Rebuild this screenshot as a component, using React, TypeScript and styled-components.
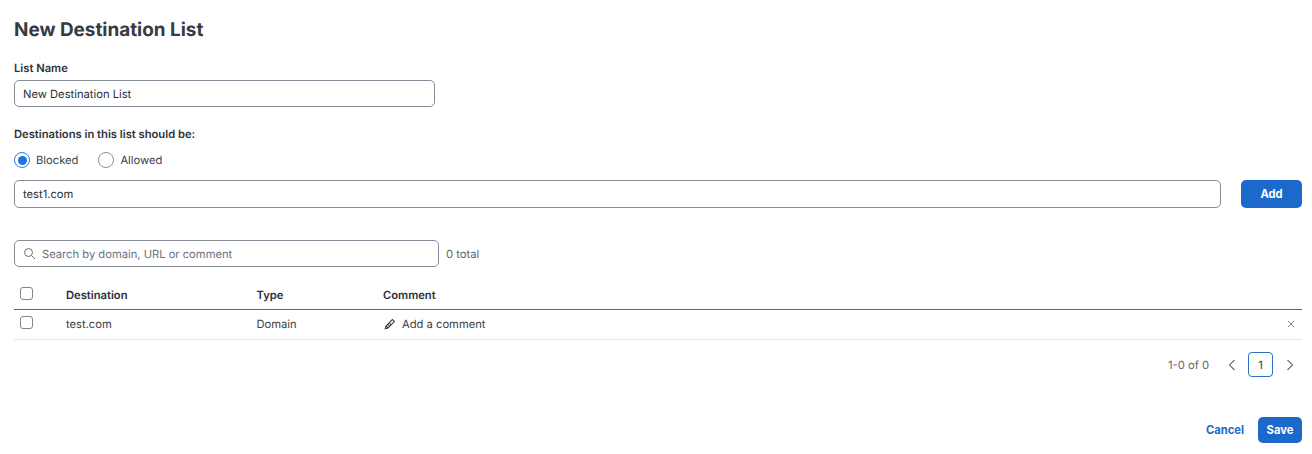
import React from "react";
import styled, { createGlobalStyle } from "styled-components";

const Global = createGlobalStyle`
  html, body { margin: 0; padding: 0; background: #fff; }
  body { font-family: Inter, "Liberation Sans", sans-serif; color: #2b2f38; text-rendering: geometricPrecision; }
`;

const Page = styled.div`
  width: 1312px;
  height: 454px;
  box-sizing: border-box;
  padding: 18px 10px 0 14px;
  overflow: hidden;
`;

const Title = styled.h1`
  margin: 0;
  font-size: 18.9px;
  line-height: 24px;
  font-weight: 700;
  color: #363a42;
`;

const Label = styled.div<{ $mt: number }>`
  margin-top: ${(p) => p.$mt}px;
  font-size: 11.2px;
  line-height: 14px;
  font-weight: 600;
  color: #30343c;
`;

const Field = styled.div<{ $w: string; $h: number }>`
  box-sizing: border-box;
  width: ${(p) => p.$w};
  height: ${(p) => p.$h}px;
  border: 1px solid #858c98;
  border-radius: 5px;
  display: flex;
  align-items: center;
  padding: 0 8px;
  font-size: 11.2px;
  color: #2b2f38;
  background: #fff;
  gap: 6px;
`;

const NameField = styled(Field)`
  margin-top: 5px;
`;

const RadioRow = styled.div`
  display: flex;
  align-items: center;
  height: 16px;
  margin-top: 11px;
  font-size: 11.2px;
  color: #40444c;
`;

const RadioOption = styled.div`
  display: flex;
  align-items: center;
  gap: 6px;
  margin-right: 20px;
`;

const RadioDot = styled.span<{ $on?: boolean }>`
  box-sizing: border-box;
  width: 16px;
  height: 16px;
  border-radius: 50%;
  border: ${(p) => (p.$on ? "1.5px solid #2f7ae5" : "1.5px solid #8a909b")};
  display: flex;
  align-items: center;
  justify-content: center;
  &::after {
    content: "";
    display: ${(p) => (p.$on ? "block" : "none")};
    width: 9px;
    height: 9px;
    border-radius: 50%;
    background: #2174dd;
  }
`;

const AddRow = styled.div`
  display: flex;
  justify-content: space-between;
  margin-top: 12px;
`;

const PrimaryButton = styled.button<{ $w: number; $h: number }>`
  width: ${(p) => p.$w}px;
  height: ${(p) => p.$h}px;
  border: 0;
  padding: 0;
  border-radius: 5px;
  background: #1b69cb;
  color: #fff;
  font-family: inherit;
  font-size: 11.2px;
  font-weight: 700;
`;

const SearchRow = styled.div`
  display: flex;
  align-items: center;
  gap: 7px;
  margin-top: 32px;
  font-size: 11.2px;
  color: #60656e;
`;

const Placeholder = styled.span`
  color: #6d727b;
`;

const Row = styled.div<{ $h: number; $line: string }>`
  display: grid;
  grid-template-columns: 52px 190.5px 126.5px 1fr 14px;
  align-items: center;
  height: ${(p) => p.$h}px;
  border-bottom: 1px solid ${(p) => p.$line};
  font-size: 11.2px;
  color: #3b3f47;
`;

const HeadRow = styled(Row)`
  margin-top: 13px;
  font-weight: 600;
  color: #2b2f38;
`;

const BodyRow = styled(Row)`
  box-sizing: border-box;
  padding-bottom: 2px;
`;

const CheckCell = styled.div<{ $up: number }>`
  padding-left: 6px;
  display: flex;
  padding-bottom: ${(p) => p.$up}px;
`;

const Checkbox = styled.span`
  box-sizing: border-box;
  width: 13px;
  height: 13px;
  border: 1px solid #7f8793;
  border-radius: 3px;
`;

const CommentCell = styled.div`
  display: flex;
  align-items: center;
  gap: 6px;
  padding-left: 1px;
`;

const Pager = styled.div`
  display: flex;
  align-items: center;
  justify-content: flex-end;
  height: 25px;
  margin-top: 12px;
  padding-right: 7px;
  font-size: 11.2px;
  color: #60656e;
`;

const PagerInfo = styled.span`
  margin-right: 18px;
`;

const PageBox = styled.span`
  box-sizing: border-box;
  width: 25px;
  height: 25px;
  border: 1px solid #2a6fc9;
  border-radius: 4px;
  display: flex;
  align-items: center;
  justify-content: center;
  color: #30343c;
  margin: 0 12px 0 11px;
`;

const Footer = styled.div`
  display: flex;
  justify-content: flex-end;
  align-items: center;
  gap: 14px;
  margin-top: 40px;
`;

const TextButton = styled.button`
  border: 0;
  background: none;
  padding: 0;
  font-family: inherit;
  font-size: 11.2px;
  font-weight: 700;
  color: #1b69cb;
`;

const Chevron = ({ left }: { left?: boolean }) => (
  <svg width="10" height="12" viewBox="0 0 10 12" fill="none" stroke="#6f747d" strokeWidth="1.2">
    <path d={left ? "M7.5 1 L2.5 6 L7.5 11" : "M2.5 1 L7.5 6 L2.5 11"} />
  </svg>
);

export default function App() {
  return (
    <Page>
      <Global />
      <Title>New Destination List</Title>
      <Label $mt={19}>List Name</Label>
      <NameField $w="421px" $h={27}>New Destination List</NameField>
      <Label $mt={20}>Destinations in this list should be:</Label>
      <RadioRow>
        <RadioOption><RadioDot $on />Blocked</RadioOption>
        <RadioOption><RadioDot />Allowed</RadioOption>
      </RadioRow>
      <AddRow>
        <Field $w="1207px" $h={28}>test1.com</Field>
        <PrimaryButton $w={61} $h={28}>Add</PrimaryButton>
      </AddRow>
      <SearchRow>
        <Field $w="425px" $h={27}>
          <svg width="13" height="13" viewBox="0 0 13 13" fill="none" stroke="#6d727b" strokeWidth="1">
            <circle cx="5.5" cy="5.5" r="4" />
            <path d="M8.5 8.5 L12 12" />
          </svg>
          <Placeholder>Search by domain, URL or comment</Placeholder>
        </Field>
        0 total
      </SearchRow>
      <HeadRow $h={29} $line="#5f646d">
        <CheckCell $up={2}><Checkbox /></CheckCell>
        <div>Destination</div>
        <div>Type</div>
        <div>Comment</div>
        <div />
      </HeadRow>
      <BodyRow $h={30} $line="#e4e6e9">
        <CheckCell $up={2}><Checkbox /></CheckCell>
        <div>test.com</div>
        <div>Domain</div>
        <CommentCell>
          <svg width="12" height="12" viewBox="0 0 12 12" fill="none" stroke="#3b3f47" strokeWidth="1.1">
            <path d="M1.2 10.8 L2 8 L8.4 1.6 L10.4 3.6 L4 10 Z" />
            <path d="M2 8 L4 10 M3.6 6.4 L5.6 8.4 M5.2 4.8 L7.2 6.8" />
          </svg>
          Add a comment
        </CommentCell>
        <svg width="8" height="8" viewBox="0 0 8 8" fill="none" stroke="#6f747d" strokeWidth="0.9" style={{ justifySelf: "end", marginRight: 7 }}>
          <path d="M1 1 L7 7 M7 1 L1 7" />
        </svg>
      </BodyRow>
      <Pager>
        <PagerInfo>1-0 of 0</PagerInfo>
        <Chevron left />
        <PageBox>1</PageBox>
        <Chevron />
      </Pager>
      <Footer>
        <TextButton>Cancel</TextButton>
        <PrimaryButton $w={44} $h={26}>Save</PrimaryButton>
      </Footer>
    </Page>
  );
}
